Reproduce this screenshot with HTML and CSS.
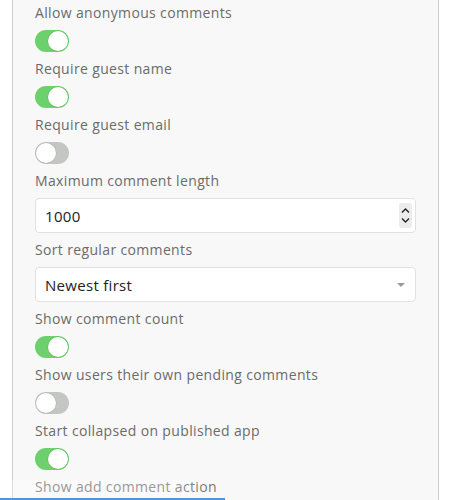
FILE: index.html
```html
<!DOCTYPE html>
<html lang="en">
<head>
    <meta charset="UTF-8">
    <meta name="viewport" content="width=device-width, initial-scale=1.0">
    <title>Comment settings</title>
    <link rel="stylesheet" href="styles.css">
</head>
<body>
    <div class="panel">
        <div class="field">
            <label class="field-label">Allow anonymous comments</label>
            <span class="toggle on"><span class="knob"></span></span>
        </div>
        <div class="field">
            <label class="field-label">Require guest name</label>
            <span class="toggle on"><span class="knob"></span></span>
        </div>
        <div class="field">
            <label class="field-label">Require guest email</label>
            <span class="toggle"><span class="knob"></span></span>
        </div>
        <div class="field">
            <label class="field-label">Maximum comment length</label>
            <div class="input">
                <span class="input-value">1000</span>
                <span class="spinner">
                    <svg width="13" height="25" viewBox="0 0 13 25">
                        <path d="M3 9.5 L6.5 6 L10 9.5" fill="none" stroke="#222" stroke-width="1.3"/>
                        <path d="M3 15.5 L6.5 19 L10 15.5" fill="none" stroke="#222" stroke-width="1.3"/>
                    </svg>
                </span>
            </div>
        </div>
        <div class="field">
            <label class="field-label">Sort regular comments</label>
            <div class="input select">
                <span class="input-value">Newest first</span>
                <span class="caret"></span>
            </div>
        </div>
        <div class="field">
            <label class="field-label">Show comment count</label>
            <span class="toggle on"><span class="knob"></span></span>
        </div>
        <div class="field">
            <label class="field-label">Show users their own pending comments</label>
            <span class="toggle"><span class="knob"></span></span>
        </div>
        <div class="field">
            <label class="field-label">Start collapsed on published app</label>
            <span class="toggle on"><span class="knob"></span></span>
        </div>
        <div class="field">
            <label class="field-label">Show add comment action</label>
        </div>
    </div>

    <!-- bottom tab bar peeking in -->
    <div class="tabbar"></div>
</body>
</html>
```

FILE: styles.css
```css
body {
    margin: 0;
    background-color: #ffffff;
    font-family: "Open Sans", Arial, sans-serif;
    height: 500px;
    overflow: hidden;
    position: relative;
}
.panel {
    margin-left: 12px;
    width: 427px;
    min-height: 500px;
    box-sizing: border-box;
    background-color: #f8f8f8;
    border-left: 1px solid #cfcfcf;
    border-right: 1px solid #cfcfcf;
    padding: 3px 22px 0 22px;
    display: flex;
    flex-direction: column;
    gap: 7px;
}
.field {
    display: flex;
    flex-direction: column;
    align-items: flex-start;
    gap: 7px;
}
.field-label {
    font-size: 14px;
    line-height: 20px;
    color: #6b6b6b;
    letter-spacing: 0.35px;
}
.toggle {
    width: 34px;
    height: 22px;
    border-radius: 11px;
    background-color: #c4c6c4;
    position: relative;
    display: block;
}
.toggle.on {
    background-color: #6cd06c;
}
.knob {
    position: absolute;
    top: 1px;
    left: 1px;
    width: 20px;
    height: 20px;
    border-radius: 50%;
    background-color: #ffffff;
    box-shadow: 0 0 0 0.5px rgba(0,0,0,0.12);
}
.toggle.on .knob {
    left: 13px;
}
.input {
    align-self: stretch;
    height: 35px;
    box-sizing: border-box;
    background-color: #ffffff;
    border: 1px solid #e2e2e2;
    border-radius: 4px;
    display: flex;
    align-items: center;
    justify-content: space-between;
    padding: 0 3px 0 9px;
}
.input-value {
    font-size: 15px;
    color: #222222;
    letter-spacing: 0.3px;
}
.spinner {
    width: 13px;
    height: 25px;
    background-color: #ececec;
    border-radius: 3px;
    display: block;
}
.spinner svg {
    display: block;
}
.select {
    padding-right: 10px;
}
.caret {
    width: 0;
    height: 0;
    border-left: 4px solid transparent;
    border-right: 4px solid transparent;
    border-top: 4px solid #9a9a9a;
}
.tabbar {
    position: absolute;
    left: 0;
    bottom: 0;
    width: 225px;
    height: 18px;
    background: linear-gradient(to right, rgba(255,255,255,0.3) 75%, rgba(255,255,255,0));
    border-bottom: 2px solid #5b8fd9;
}
```
